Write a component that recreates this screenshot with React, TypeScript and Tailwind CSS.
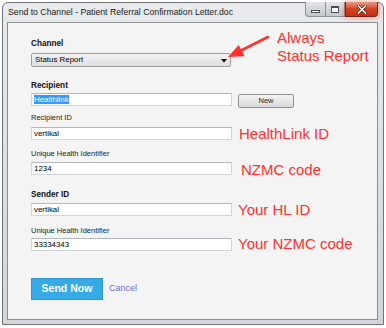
import React from "react"

const sans = "font-['Liberation_Sans',Arial,sans-serif]"

function Label({ children, bold }: { children: React.ReactNode; bold?: boolean }) {
  return (
    <div
      className={
        bold
          ? "h-[10px] text-[8.2px] leading-[10px] font-bold text-[#111]"
          : "h-[10px] text-[7.5px] leading-[10px] text-[#222]"
      }
    >
      {children}
    </div>
  )
}

function TextBox({ children }: { children: React.ReactNode }) {
  return (
    <div className="h-[13px] w-[201px] shrink-0 border border-[#d3d5d9] border-t-[#b4b7bc] bg-white pl-[2px] text-[7.9px] leading-[11px] text-black">
      {children}
    </div>
  )
}

function Note({ children, className }: { children: React.ReactNode; className: string }) {
  return <div className={"text-[15px] leading-[13px] text-[#ff3131] whitespace-nowrap " + className}>{children}</div>
}

export default function App() {
  return (
    <div className={"w-[386px] h-[328px] bg-white pl-[2px] pt-[2px] " + sans}>
      {/* window frame */}
      <div className="w-[382px] h-[323px] flex flex-col rounded-t-[6px] border border-[#6f7276] bg-gradient-to-b from-[#e9eaec] to-[#d3d5d8]">
        {/* title bar */}
        <div className="h-[19px] flex items-start shrink-0">
          <div className="pl-[5px] text-[8.7px] leading-[19px] text-[#1b1b1b] whitespace-nowrap">
            Send to Channel - Patient Referral Confirmation Letter.doc
          </div>
          <div className="ml-auto mr-[5px] -mt-px flex">
            <div className="w-[21px] h-[15px] flex items-center justify-center rounded-bl-[4px] border border-[#8d9096] border-t-0 bg-gradient-to-b from-[#e4e6e9] to-[#c4c7cc]">
              <div className="mt-[4px] w-[9px] h-[3px] border border-[#4a4d52] bg-white" />
            </div>
            <div className="w-[19px] h-[15px] flex items-center justify-center border-y border-r border-[#8d9096] border-t-0 bg-gradient-to-b from-[#e4e6e9] to-[#c4c7cc]">
              <div className="w-[8px] h-[7px] border border-[#4a4d52] border-t-2 bg-white" />
            </div>
            <div className="w-[33px] h-[15px] flex items-center justify-center rounded-br-[4px] border border-[#7a2016] border-t-0 bg-gradient-to-b from-[#e99b84] via-[#d2401f] to-[#c0331a] shadow-[0_0_6px_rgba(230,70,40,0.6)]">
              <svg width="10" height="9" viewBox="0 0 10 9">
                <path d="M1.5 1 L8.5 8 M8.5 1 L1.5 8" stroke="#5a1a10" strokeWidth="3" strokeLinecap="square" />
                <path d="M1.5 1 L8.5 8 M8.5 1 L1.5 8" stroke="#ffffff" strokeWidth="1.6" strokeLinecap="square" />
              </svg>
            </div>
          </div>
        </div>

        {/* client area */}
        <div className="relative ml-[4px] w-[371px] h-[298px] shrink-0 border border-[#8a8d92] bg-[#f4f4f4] pl-[23px] pt-[6px]">
          {/* channel row */}
          <div className="flex items-start">
            <div className="w-[201px] pt-[10px]">
              <Label bold>Channel</Label>
              <div className="mt-[4px] h-[14px] w-[200px] flex items-center rounded-[2px] border border-[#9b9da1] bg-gradient-to-b from-[#f3f3f3] to-[#dedede] pl-[3px] pr-[3px]">
                <span className="text-[7.9px] leading-[12px] text-black">Status Report</span>
                <svg className="ml-auto mt-[2px]" width="6" height="4" viewBox="0 0 6 4">
                  <path d="M0 0 L6 0 L3 3.5 Z" fill="#000" />
                </svg>
              </div>
            </div>
            <div className="ml-[45px] text-[15px] leading-[17.5px] text-[#ff3131] whitespace-nowrap">
              <div>Always</div>
              <div>Status Report</div>
            </div>
          </div>

          {/* recipient */}
          <div className="mt-[14px]">
            <Label bold>Recipient</Label>
          </div>
          <div className="mt-[2px] flex items-start">
            <TextBox>
              <span className="bg-[#3399ff] text-white">Healthlink</span>
            </TextBox>
            <div className="ml-[6px] mt-px w-[56px] h-[14px] flex items-center justify-center rounded-[2px] border border-[#8f9194] bg-gradient-to-b from-[#f4f4f4] to-[#d9d9d9] text-[7.5px] text-[#222]">
              New
            </div>
          </div>

          <div className="mt-[5px]">
            <Label>Recipient ID</Label>
          </div>
          <div className="mt-[4px] flex items-center">
            <TextBox>vertikal</TextBox>
            <Note className="ml-[7px]">HealthLink ID</Note>
          </div>

          <div className="mt-[9px]">
            <Label>Unique Health Identifier</Label>
          </div>
          <div className="mt-[2px] flex items-center">
            <TextBox>1234</TextBox>
            <Note className="ml-[9px] mt-[2px]">NZMC code</Note>
          </div>

          {/* sender */}
          <div className="mt-[14px]">
            <Label bold>Sender ID</Label>
          </div>
          <div className="mt-[3px] flex items-center">
            <TextBox>vertikal</TextBox>
            <Note className="ml-[6px]">Your HL ID</Note>
          </div>

          <div className="mt-[10px]">
            <Label>Unique Health Identifier</Label>
          </div>
          <div className="mt-[2px] flex items-center">
            <TextBox>33334343</TextBox>
            <Note className="ml-[6px] -mt-[2px]">Your NZMC code</Note>
          </div>

          {/* actions */}
          <div className="mt-[27px] flex items-center">
            <div className="w-[72px] h-[22px] flex items-center justify-center border border-[#2d98d2] bg-[#36aae6] text-[10.5px] font-bold text-white">
              Send Now
            </div>
            <div className="ml-[6px] text-[9px] text-[#6b6fd8]">Cancel</div>
          </div>

          {/* callout arrow */}
          <svg className="absolute left-[210px] top-[8px]" width="60" height="40" viewBox="0 0 60 40">
            <path d="M22 20 L50 6" stroke="#ff3131" strokeWidth="2.6" strokeLinecap="round" />
            <path d="M10 26 L20.7 13.9 L26.6 25.2 Z" fill="#ff3131" />
          </svg>
        </div>
      </div>
    </div>
  )
}
